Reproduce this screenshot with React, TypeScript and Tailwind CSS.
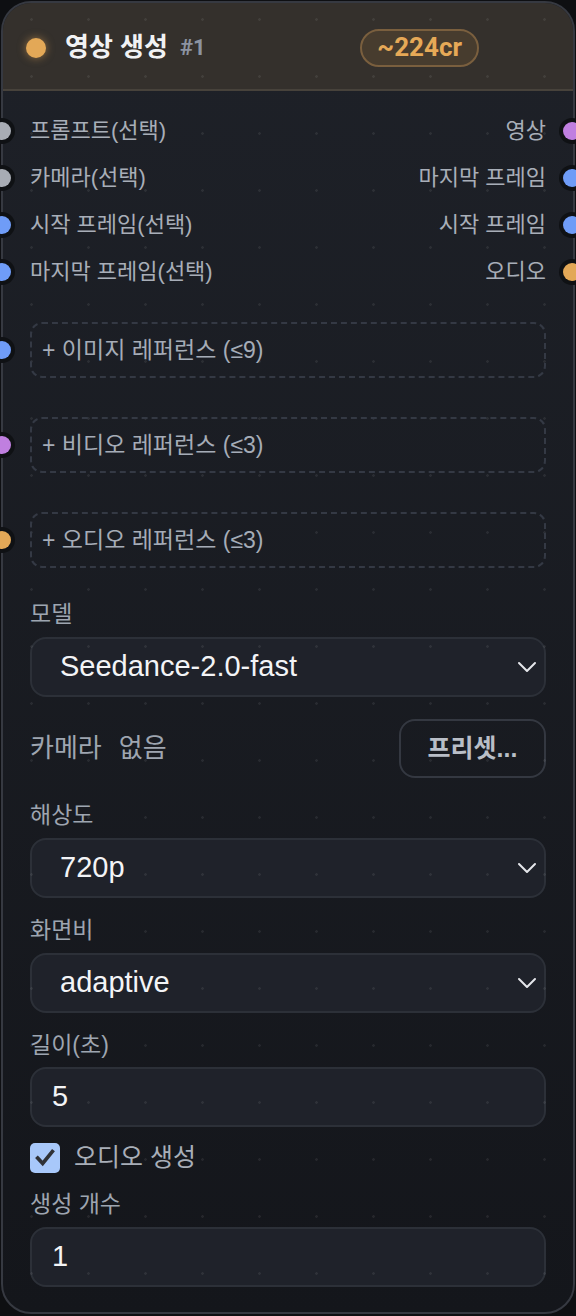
import type { ReactNode } from 'react';

const HANDLE_COLORS = {
  gray: 'bg-[#a8acb4]',
  blue: 'bg-[#6f9cf7]',
  purple: 'bg-[#c07fe0]',
  orange: 'bg-[#e3a857]',
};

type HandleColor = keyof typeof HANDLE_COLORS;

const Handle = ({ color, side }: { color: HandleColor; side: 'left' | 'right' }) => (
  <span
    className={`absolute top-1/2 -translate-y-1/2 w-[26px] h-[26px] rounded-full bg-[#0f1114] flex items-center justify-center ${
      side === 'left' ? 'left-[-14px]' : 'right-[-12px]'
    }`}
  >
    <span className={`w-[18px] h-[18px] rounded-full ${HANDLE_COLORS[color]}`} />
  </span>
);

const Chevron = () => (
  <svg width="20" height="20" viewBox="0 0 20 20" fill="none" stroke="#e5e7eb" strokeWidth="2" strokeLinecap="round" strokeLinejoin="round">
    <polyline points="2,6 10,14 18,6" />
  </svg>
);

const Label = ({ children, className = '' }: { children: ReactNode; className?: string }) => (
  <div className={`px-[27px] h-[28px] leading-[28px] text-[23px] text-[#9ea5b0] ${className}`}>{children}</div>
);

const Select = ({ value, className = '' }: { value: string; className?: string }) => (
  <div className={`px-[27px] ${className}`}>
    <div className="h-[60px] rounded-[16px] border-2 border-[#2c3038] bg-[#1f222a] flex items-center justify-between pl-[28px] pr-[7px]">
      <span className="text-[29px] text-[#f3f4f6]">{value}</span>
      <Chevron />
    </div>
  </div>
);

const NumberInput = ({ value, className = '' }: { value: string; className?: string }) => (
  <div className={`px-[27px] ${className}`}>
    <div className="h-[60px] rounded-[16px] border-2 border-[#2c3038] bg-[#1f222a] flex items-center pl-[20px]">
      <span className="text-[29px] text-[#f3f4f6]">{value}</span>
    </div>
  </div>
);

const ports: { left: string; leftColor: HandleColor; right: string; rightColor: HandleColor }[] = [
  { left: '프롬프트(선택)', leftColor: 'gray', right: '영상', rightColor: 'purple' },
  { left: '카메라(선택)', leftColor: 'gray', right: '마지막 프레임', rightColor: 'blue' },
  { left: '시작 프레임(선택)', leftColor: 'blue', right: '시작 프레임', rightColor: 'blue' },
  { left: '마지막 프레임(선택)', leftColor: 'blue', right: '오디오', rightColor: 'orange' },
];

const refs: { label: string; color: HandleColor }[] = [
  { label: '+ 이미지 레퍼런스 (≤9)', color: 'blue' },
  { label: '+ 비디오 레퍼런스 (≤3)', color: 'purple' },
  { label: '+ 오디오 레퍼런스 (≤3)', color: 'orange' },
];

export default function App() {
  return (
    <div className="min-h-screen bg-[#0e0f12] pt-[1px] font-['Liberation_Sans','Noto_Sans_CJK_KR',sans-serif]">
      <div className="relative mx-[1px] rounded-[30px] border-2 border-[#363941] bg-gradient-to-b from-[#1e2128] to-[#14161b]">
        {/* canvas dots showing through */}
        <div className="pointer-events-none absolute inset-0 rounded-[28px] bg-[radial-gradient(circle,rgba(255,255,255,0.07)_1px,transparent_1.6px)] bg-[length:57px_57px] bg-[position:0_-12px]" />

        <div className="h-[88px] rounded-t-[28px] bg-[#34302c] border-b-2 border-[#47423b] flex items-center pl-[23px] pt-[3px]">
          <span className="w-[20px] h-[20px] rounded-full bg-[#e3a857] shadow-[0_0_8px_rgba(227,168,87,0.55)]" />
          <span className="ml-[19px] text-[26px] font-bold text-[#f1f2f4]">영상 생성</span>
          <span className="ml-[12px] text-[22px] font-bold text-[#8c93a1] font-['Roboto',sans-serif]">#1</span>
          <span className="ml-auto mr-[94px] h-[38px] px-[15px] rounded-full border-2 border-[#7a5f3e] bg-[#473c2e] flex items-center text-[26px] font-bold text-[#e6a957] font-['Roboto',sans-serif]">
            ~224cr
          </span>
        </div>

        <div className="pt-[16px] pb-[25px]">
          {ports.map((p) => (
            <div key={p.left} className="relative h-[47px] px-[27px] flex items-center justify-between text-[22px] text-[#a8aeb8]">
              <Handle color={p.leftColor} side="left" />
              <span>{p.left}</span>
              <span>{p.right}</span>
              <Handle color={p.rightColor} side="right" />
            </div>
          ))}

          <div className="mt-[27px] flex flex-col gap-[39px]">
            {refs.map((r) => (
              <div key={r.label} className="relative px-[27px]">
                <Handle color={r.color} side="left" />
                <div className="h-[56px] rounded-[12px] border-2 border-dashed border-[#343944] flex items-center pl-[10px] text-[23px] text-[#a5acb7]">
                  {r.label}
                </div>
              </div>
            ))}
          </div>

          <Label className="mt-[32px]">모델</Label>
          <Select value="Seedance-2.0-fast" className="mt-[9px]" />

          <div className="mt-[22px] px-[27px] flex items-center justify-between">
            <div className="flex items-center gap-[17px] text-[26px] text-[#9ea5b0]">
              <span>카메라</span>
              <span>없음</span>
            </div>
            <div className="h-[59px] w-[147px] rounded-[16px] border-2 border-[#343841] flex items-center justify-center text-[25px] font-semibold text-[#b9bec7]">
              프리셋...
            </div>
          </div>

          <Label className="mt-[23px]">해상도</Label>
          <Select value="720p" className="mt-[9px]" />

          <Label className="mt-[18px]">화면비</Label>
          <Select value="adaptive" className="mt-[9px]" />

          <Label className="mt-[18px]">길이(초)</Label>
          <NumberInput value="5" className="mt-[8px]" />

          <div className="mt-[16px] px-[27px] h-[30px] flex items-center gap-[14px]">
            <span className="w-[30px] h-[30px] rounded-[5px] bg-[#a8c8fa] flex items-center justify-center">
              <svg width="22" height="22" viewBox="0 0 24 24" fill="none" stroke="#2f3136" strokeWidth="4" strokeLinecap="square">
                <polyline points="4,12 9.5,18 20,5" />
              </svg>
            </span>
            <span className="text-[25px] text-[#a8aeb8]">오디오 생성</span>
          </div>

          <Label className="mt-[17px]">생성 개수</Label>
          <NumberInput value="1" className="mt-[9px]" />
        </div>
      </div>
    </div>
  );
}
